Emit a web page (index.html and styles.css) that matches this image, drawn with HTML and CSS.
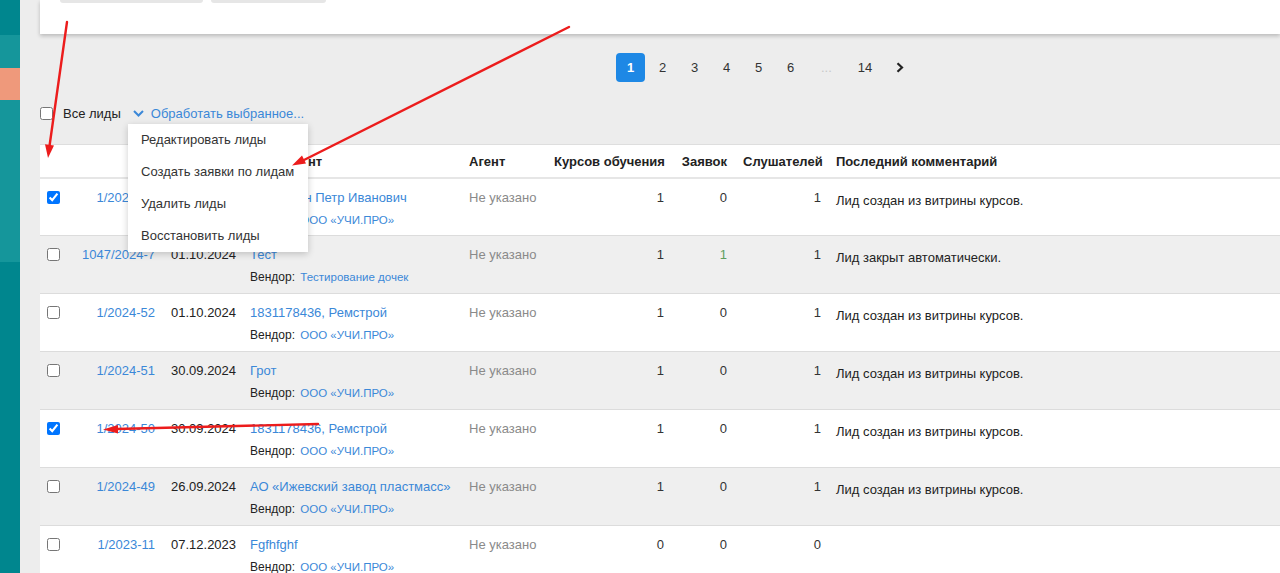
FILE: index.html
```html
<!DOCTYPE html>
<html lang="ru">
<head>
<meta charset="utf-8">
<title>Лиды</title>
<link rel="stylesheet" href="styles.css">
</head>
<body>
<aside class="sidebar">
  <div class="seg seg-dark seg-top"></div>
  <div class="seg seg-light seg-a"></div>
  <div class="seg seg-accent"></div>
  <div class="seg seg-light seg-b"></div>
  <div class="seg seg-dark seg-rest"></div>
</aside>
<main class="content">
  <section class="card">
    <div class="toolbar">
      <span class="tool-btn tool-btn-wide"></span>
      <span class="tool-btn tool-btn-narrow"></span>
    </div>
  </section>

  <nav class="pager">
    <span class="page active">1</span>
    <span class="page">2</span>
    <span class="page">3</span>
    <span class="page">4</span>
    <span class="page">5</span>
    <span class="page">6</span>
    <span class="page dots">...</span>
    <span class="page">14</span>
    <span class="page next"><svg width="8" height="11" viewBox="0 0 8 11"><path d="M1.5 1.2 L6 5.5 L1.5 9.8" fill="none" stroke="#222" stroke-width="2.2"/></svg></span>
  </nav>

  <div class="bulk">
    <input type="checkbox" class="cb">
    <span class="bulk-label">Все лиды</span>
    <span class="bulk-action">
      <svg class="chev" width="11" height="7" viewBox="0 0 11 7"><path d="M1 1 L5.5 5.5 L10 1" fill="none" stroke="#3b88d8" stroke-width="2"/></svg>
      <span class="link">Обработать выбранное...</span>
    </span>
    <ul class="menu">
      <li>Редактировать лиды</li>
      <li>Создать заявки по лидам</li>
      <li>Удалить лиды</li>
      <li>Восстановить лиды</li>
    </ul>
  </div>

  <table class="leads">
    <colgroup>
      <col class="c-cb"><col class="c-num"><col class="c-date"><col class="c-client"><col class="c-agent"><col class="c-courses"><col class="c-req"><col class="c-stud"><col>
    </colgroup>
    <thead>
      <tr>
        <th></th><th></th><th></th>
        <th class="left">Контрагент</th>
        <th class="left">Агент</th>
        <th>Курсов обучения</th>
        <th>Заявок</th>
        <th>Слушателей</th>
        <th class="left comment-h">Последний комментарий</th>
      </tr>
    </thead>
    <tbody>
      <tr>
        <td class="cbc"><input type="checkbox" class="cb" checked></td>
        <td class="num"><span class="link">1/2024-53</span></td>
        <td class="date">01.10.2024</td>
        <td class="client"><div class="link">Степашин Петр Иванович</div><div class="vendor">Вендор: <span class="link">ООО «УЧИ.ПРО»</span></div></td>
        <td class="agent">Не указано</td>
        <td class="n">1</td><td class="n">0</td><td class="n">1</td>
        <td class="comment">Лид создан из витрины курсов.</td>
      </tr>
      <tr>
        <td class="cbc"><input type="checkbox" class="cb"></td>
        <td class="num"><span class="link">1047/2024-7</span></td>
        <td class="date">01.10.2024</td>
        <td class="client"><div class="link">Тест</div><div class="vendor">Вендор: <span class="link">Тестирование дочек</span></div></td>
        <td class="agent">Не указано</td>
        <td class="n">1</td><td class="n green">1</td><td class="n">1</td>
        <td class="comment">Лид закрыт автоматически.</td>
      </tr>
      <tr>
        <td class="cbc"><input type="checkbox" class="cb"></td>
        <td class="num"><span class="link">1/2024-52</span></td>
        <td class="date">01.10.2024</td>
        <td class="client"><div class="link">1831178436, Ремстрой</div><div class="vendor">Вендор: <span class="link">ООО «УЧИ.ПРО»</span></div></td>
        <td class="agent">Не указано</td>
        <td class="n">1</td><td class="n">0</td><td class="n">1</td>
        <td class="comment">Лид создан из витрины курсов.</td>
      </tr>
      <tr>
        <td class="cbc"><input type="checkbox" class="cb"></td>
        <td class="num"><span class="link">1/2024-51</span></td>
        <td class="date">30.09.2024</td>
        <td class="client"><div class="link">Грот</div><div class="vendor">Вендор: <span class="link">ООО «УЧИ.ПРО»</span></div></td>
        <td class="agent">Не указано</td>
        <td class="n">1</td><td class="n">0</td><td class="n">1</td>
        <td class="comment">Лид создан из витрины курсов.</td>
      </tr>
      <tr>
        <td class="cbc"><input type="checkbox" class="cb" checked></td>
        <td class="num"><span class="link">1/2024-50</span></td>
        <td class="date">30.09.2024</td>
        <td class="client"><div class="link">1831178436, Ремстрой</div><div class="vendor">Вендор: <span class="link">ООО «УЧИ.ПРО»</span></div></td>
        <td class="agent">Не указано</td>
        <td class="n">1</td><td class="n">0</td><td class="n">1</td>
        <td class="comment">Лид создан из витрины курсов.</td>
      </tr>
      <tr>
        <td class="cbc"><input type="checkbox" class="cb"></td>
        <td class="num"><span class="link">1/2024-49</span></td>
        <td class="date">26.09.2024</td>
        <td class="client"><div class="link">АО «Ижевский завод пластмасс»</div><div class="vendor">Вендор: <span class="link">ООО «УЧИ.ПРО»</span></div></td>
        <td class="agent">Не указано</td>
        <td class="n">1</td><td class="n">0</td><td class="n">1</td>
        <td class="comment">Лид создан из витрины курсов.</td>
      </tr>
      <tr>
        <td class="cbc"><input type="checkbox" class="cb"></td>
        <td class="num"><span class="link">1/2023-11</span></td>
        <td class="date">07.12.2023</td>
        <td class="client"><div class="link">Fgfhfghf</div><div class="vendor">Вендор: <span class="link">ООО «УЧИ.ПРО»</span></div></td>
        <td class="agent">Не указано</td>
        <td class="n">0</td><td class="n">0</td><td class="n">0</td>
        <td class="comment"></td>
      </tr>
    </tbody>
  </table>
</main>

<svg class="annotations" width="1280" height="573" viewBox="0 0 1280 573">
  <g stroke="#ec1c1c" stroke-width="2.4" stroke-linecap="round" fill="none">
    <line x1="67" y1="22" x2="49.5" y2="146"/>
    <line x1="569" y1="27" x2="304" y2="160"/>
    <line x1="318" y1="424" x2="116" y2="429"/>
  </g>
  <g fill="#ec1c1c">
    <polygon points="48,158 54,145.5 45,144.3"/>
    <polygon points="292,165.5 306,163.5 302,155.5"/>
    <polygon points="103,429.5 118,433.5 118,425"/>
  </g>
</svg>
</body>
</html>
```
FILE: styles.css
```css
* { box-sizing: border-box; }
html, body { margin: 0; padding: 0; }
body {
  width: 1280px;
  height: 573px;
  overflow: hidden;
  background: #ededed;
  font-family: "Liberation Sans", Arial, sans-serif;
  font-size: 13px;
  color: #222;
  display: flex;
  position: relative;
}

.sidebar {
  width: 20px;
  flex: none;
  display: flex;
  flex-direction: column;
}
.seg-dark { background: #00868e; }
.seg-light { background: #15969b; }
.seg-accent { background: #ef997b; height: 32px; }
.seg-top { height: 35px; }
.seg-a { height: 33px; }
.seg-b { height: 162px; }
.seg-rest { flex: 1; }

.content {
  flex: 1;
  padding-left: 20px;
  min-width: 0;
}

.card {
  height: 34px;
  background: #fff;
  box-shadow: 0 2px 4px rgba(0,0,0,0.22);
  padding-left: 20px;
}
.toolbar { display: flex; gap: 8px; }
.tool-btn {
  height: 3px;
  background: #e6e6e6;
  border-radius: 0 0 4px 4px;
}
.tool-btn-wide { width: 143px; }
.tool-btn-narrow { width: 115px; }

.pager {
  display: flex;
  gap: 3px;
  margin-top: 19px;
  padding-left: 576px;
  height: 29px;
}
.page {
  min-width: 29px;
  height: 29px;
  padding: 0 10px;
  display: flex;
  align-items: center;
  justify-content: center;
  color: #333;
  font-size: 13px;
}
.page.active {
  background: #1e88e5;
  color: #fff;
  border-radius: 4px;
  font-weight: bold;
}
.page.dots { color: #c8c8c8; padding: 0 13px; }
.page.next { padding: 0 11px; }

.bulk {
  position: relative;
  display: flex;
  align-items: center;
  height: 20px;
  margin-top: 21px;
}
.cb {
  width: 13px;
  height: 13px;
  margin: 0;
  flex: none;
}
.bulk-label { margin-left: 10px; color: #222; }
.bulk-action {
  display: flex;
  align-items: center;
  margin-left: 12px;
}
.chev { margin-right: 7px; }
.link { color: #3b88d8; }

.menu {
  position: absolute;
  left: 88px;
  top: 21px;
  width: 180px;
  margin: 0;
  padding: 0;
  list-style: none;
  background: #fff;
  box-shadow: 0 2px 7px rgba(0,0,0,0.2);
  z-index: 5;
}
.menu li {
  height: 32px;
  line-height: 32px;
  padding-left: 13px;
  color: #333;
  white-space: nowrap;
}

.leads {
  width: 100%;
  margin-top: 21px;
  border-collapse: collapse;
  table-layout: fixed;
}
.c-cb { width: 30px; }
.c-num { width: 93px; }
.c-date { width: 79px; }
.c-client { width: 219px; }
.c-agent { width: 85px; }
.c-courses { width: 126px; }
.c-req { width: 63px; }
.c-stud { width: 94px; }

.leads thead tr {
  background: #fff;
  border-top: 1px solid #dedede;
  border-bottom: 2px solid #e6e6e6;
}
.leads th {
  height: 33px;
  padding: 1px 8px 0;
  text-align: right;
  font-weight: bold;
  color: #222;
  white-space: nowrap;
}
.leads th.left { text-align: left; }
.leads th.comment-h { padding-left: 7px; }

.leads tbody tr {
  height: 58px;
  border-top: 1px solid #dcdcdc;
  background: #fff;
}
.leads tbody tr:nth-child(even) { background: #efefef; }
.leads td {
  vertical-align: top;
  padding: 11px 8px 0;
  line-height: 16px;
  white-space: nowrap;
}
.leads td.cbc { padding: 12px 0 0 7px; }
.leads td.num { text-align: right; }
.leads td.n { text-align: right; color: #333; }
.leads td.n.green { color: #5f9e5f; }
.leads td.agent { color: #8a8a8a; }
.leads td.comment { padding: 14px 0 0 7px; color: #222; }
.vendor {
  margin-top: 6px;
  font-size: 12px;
  color: #222;
}
.vendor .link {
  font-size: 11.5px;
  margin-left: 2px;
}

.annotations {
  position: absolute;
  left: 0;
  top: 0;
  pointer-events: none;
  z-index: 10;
}
```
